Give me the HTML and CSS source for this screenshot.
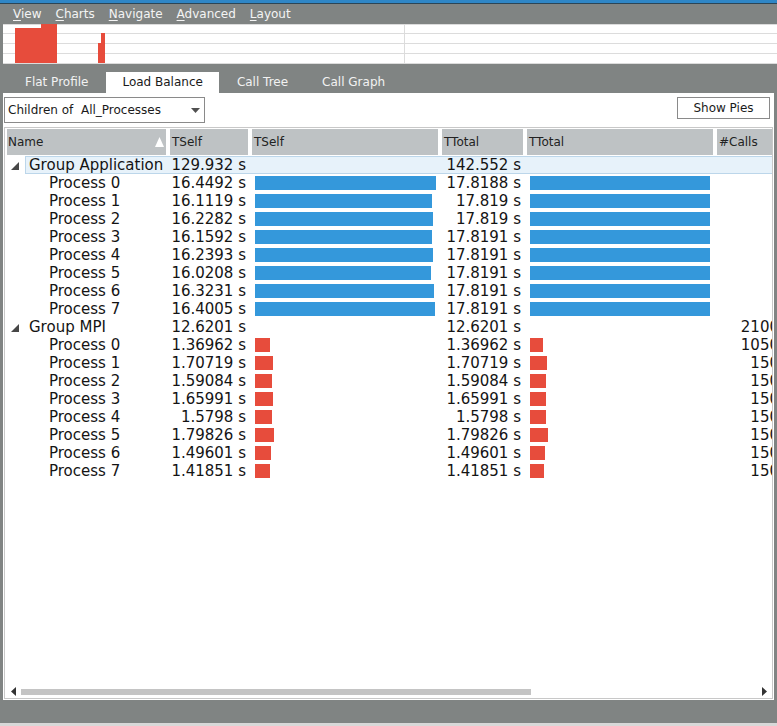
FILE: index.html
```html
<!DOCTYPE html>
<html>
<head>
<meta charset="utf-8">
<link rel="stylesheet" href="styles.css">
</head>
<body>
<div class="app">
  <div class="titlebar"></div>
  <div class="menubar">
    <span class="menu"><u>V</u>iew</span>
    <span class="menu"><u>C</u>harts</span>
    <span class="menu"><u>N</u>avigate</span>
    <span class="menu"><u>A</u>dvanced</span>
    <span class="menu"><u>L</u>ayout</span>
  </div>
  <div class="chart">
    <svg width="774" height="40" viewBox="0 0 774 40">
      <rect x="0" y="0" width="774" height="40" fill="#ffffff"/>
      <rect x="0" y="0" width="774" height="1" fill="#dcdcdc"/>
      <rect x="0" y="9" width="774" height="1" fill="#dcdcdc"/>
      <rect x="0" y="19" width="774" height="1" fill="#dcdcdc"/>
      <rect x="0" y="29" width="774" height="1" fill="#dcdcdc"/>
      <rect x="0" y="39" width="774" height="1" fill="#dcdcdc"/>
      <rect x="401" y="0" width="1" height="40" fill="#dcdcdc"/>
      <rect x="12" y="4" width="42" height="35" fill="#e74c3c"/>
      <rect x="38" y="0" width="16" height="4" fill="#e74c3c"/>
      <rect x="95" y="19" width="3" height="20" fill="#e74c3c"/>
      <rect x="98" y="9" width="4" height="30" fill="#e74c3c"/>
    </svg>
  </div>
  <div class="tabbar">
    <span class="tab">Flat Profile</span>
    <span class="tab active">Load Balance</span>
    <span class="tab">Call Tree</span>
    <span class="tab">Call Graph</span>
  </div>
  <div class="panel">
    <div class="toolbar">
      <div class="combo">
        <span class="combo-text">Children of  All_Processes</span>
        <svg class="combo-arrow" width="9" height="5" viewBox="0 0 9 5"><polygon points="0,0 9,0 4.5,5" fill="#505050"/></svg>
      </div>
      <div class="button">Show Pies</div>
    </div>
    <div class="table">
      <div class="header">
        <div class="hcell name-h"><span>Name</span><svg width="9" height="10" viewBox="0 0 9 10"><polygon points="4.5,0 9,10 0,10" fill="#ffffff"/></svg></div>
        <div class="hcell">TSelf</div>
        <div class="hcell">TSelf</div>
        <div class="hcell">TTotal</div>
        <div class="hcell">TTotal</div>
        <div class="hcell">#Calls</div>
      </div>
      <div class="rows">
        <div class="row">
          <div class="twisty"><svg width="8" height="8" viewBox="0 0 8 8"><polygon points="8,0 8,8 0,8" fill="#474747"/></svg></div>
          <div class="cells selected">
            <div class="c name">Group Application</div>
            <div class="c num">129.932 s</div>
            <div class="c bar"></div>
            <div class="c num">142.552 s</div>
            <div class="c bar"></div>
            <div class="c calls"></div>
          </div>
        </div>
        <div class="row"><div class="twisty"></div><div class="cells">
          <div class="c name child">Process 0</div><div class="c num">16.4492 s</div><div class="c bar"><i class="b blue" style="width:181px"></i></div><div class="c num">17.8188 s</div><div class="c bar"><i class="b blue" style="width:180px"></i></div><div class="c calls"></div></div></div>
        <div class="row"><div class="twisty"></div><div class="cells">
          <div class="c name child">Process 1</div><div class="c num">16.1119 s</div><div class="c bar"><i class="b blue" style="width:177px"></i></div><div class="c num">17.819 s</div><div class="c bar"><i class="b blue" style="width:180px"></i></div><div class="c calls"></div></div></div>
        <div class="row"><div class="twisty"></div><div class="cells">
          <div class="c name child">Process 2</div><div class="c num">16.2282 s</div><div class="c bar"><i class="b blue" style="width:178px"></i></div><div class="c num">17.819 s</div><div class="c bar"><i class="b blue" style="width:180px"></i></div><div class="c calls"></div></div></div>
        <div class="row"><div class="twisty"></div><div class="cells">
          <div class="c name child">Process 3</div><div class="c num">16.1592 s</div><div class="c bar"><i class="b blue" style="width:177px"></i></div><div class="c num">17.8191 s</div><div class="c bar"><i class="b blue" style="width:180px"></i></div><div class="c calls"></div></div></div>
        <div class="row"><div class="twisty"></div><div class="cells">
          <div class="c name child">Process 4</div><div class="c num">16.2393 s</div><div class="c bar"><i class="b blue" style="width:178px"></i></div><div class="c num">17.8191 s</div><div class="c bar"><i class="b blue" style="width:180px"></i></div><div class="c calls"></div></div></div>
        <div class="row"><div class="twisty"></div><div class="cells">
          <div class="c name child">Process 5</div><div class="c num">16.0208 s</div><div class="c bar"><i class="b blue" style="width:176px"></i></div><div class="c num">17.8191 s</div><div class="c bar"><i class="b blue" style="width:180px"></i></div><div class="c calls"></div></div></div>
        <div class="row"><div class="twisty"></div><div class="cells">
          <div class="c name child">Process 6</div><div class="c num">16.3231 s</div><div class="c bar"><i class="b blue" style="width:179px"></i></div><div class="c num">17.8191 s</div><div class="c bar"><i class="b blue" style="width:180px"></i></div><div class="c calls"></div></div></div>
        <div class="row"><div class="twisty"></div><div class="cells">
          <div class="c name child">Process 7</div><div class="c num">16.4005 s</div><div class="c bar"><i class="b blue" style="width:180px"></i></div><div class="c num">17.8191 s</div><div class="c bar"><i class="b blue" style="width:180px"></i></div><div class="c calls"></div></div></div>
        <div class="row">
          <div class="twisty"><svg width="8" height="8" viewBox="0 0 8 8"><polygon points="8,0 8,8 0,8" fill="#474747"/></svg></div>
          <div class="cells">
            <div class="c name">Group MPI</div><div class="c num">12.6201 s</div><div class="c bar"></div><div class="c num">12.6201 s</div><div class="c bar"></div><div class="c calls">2100</div>
          </div>
        </div>
        <div class="row"><div class="twisty"></div><div class="cells">
          <div class="c name child">Process 0</div><div class="c num">1.36962 s</div><div class="c bar"><i class="b red" style="width:15px"></i></div><div class="c num">1.36962 s</div><div class="c bar"><i class="b red" style="width:13px"></i></div><div class="c calls">1050</div></div></div>
        <div class="row"><div class="twisty"></div><div class="cells">
          <div class="c name child">Process 1</div><div class="c num">1.70719 s</div><div class="c bar"><i class="b red" style="width:18px"></i></div><div class="c num">1.70719 s</div><div class="c bar"><i class="b red" style="width:17px"></i></div><div class="c calls">150</div></div></div>
        <div class="row"><div class="twisty"></div><div class="cells">
          <div class="c name child">Process 2</div><div class="c num">1.59084 s</div><div class="c bar"><i class="b red" style="width:17px"></i></div><div class="c num">1.59084 s</div><div class="c bar"><i class="b red" style="width:16px"></i></div><div class="c calls">150</div></div></div>
        <div class="row"><div class="twisty"></div><div class="cells">
          <div class="c name child">Process 3</div><div class="c num">1.65991 s</div><div class="c bar"><i class="b red" style="width:18px"></i></div><div class="c num">1.65991 s</div><div class="c bar"><i class="b red" style="width:16px"></i></div><div class="c calls">150</div></div></div>
        <div class="row"><div class="twisty"></div><div class="cells">
          <div class="c name child">Process 4</div><div class="c num">1.5798 s</div><div class="c bar"><i class="b red" style="width:17px"></i></div><div class="c num">1.5798 s</div><div class="c bar"><i class="b red" style="width:16px"></i></div><div class="c calls">150</div></div></div>
        <div class="row"><div class="twisty"></div><div class="cells">
          <div class="c name child">Process 5</div><div class="c num">1.79826 s</div><div class="c bar"><i class="b red" style="width:19px"></i></div><div class="c num">1.79826 s</div><div class="c bar"><i class="b red" style="width:18px"></i></div><div class="c calls">150</div></div></div>
        <div class="row"><div class="twisty"></div><div class="cells">
          <div class="c name child">Process 6</div><div class="c num">1.49601 s</div><div class="c bar"><i class="b red" style="width:16px"></i></div><div class="c num">1.49601 s</div><div class="c bar"><i class="b red" style="width:15px"></i></div><div class="c calls">150</div></div></div>
        <div class="row"><div class="twisty"></div><div class="cells">
          <div class="c name child">Process 7</div><div class="c num">1.41851 s</div><div class="c bar"><i class="b red" style="width:15px"></i></div><div class="c num">1.41851 s</div><div class="c bar"><i class="b red" style="width:14px"></i></div><div class="c calls">150</div></div></div>
      </div>
      <div class="scrollbar">
        <svg class="sarrow" width="5" height="9" viewBox="0 0 5 9"><polygon points="5,0 5,9 0,4.5" fill="#333"/></svg>
        <div class="track"><div class="thumb"></div></div>
        <svg class="sarrow" width="5" height="9" viewBox="0 0 5 9"><polygon points="0,0 5,4.5 0,9" fill="#333"/></svg>
      </div>
    </div>
  </div>
  <div class="statusbar"></div>
</div>
</body>
</html>
```

FILE: styles.css
```css
* { box-sizing: border-box; }
html, body {
  margin: 0;
  padding: 0;
}
body {
  width: 777px;
  height: 726px;
  overflow: hidden;
  background: #808483;
  font-family: "DejaVu Sans", "Liberation Sans", sans-serif;
}
.app {
  display: flex;
  flex-direction: column;
  width: 777px;
  height: 726px;
}
.titlebar {
  height: 4px;
  background: #2f86c6;
  border-bottom: 1px solid #2b4556;
}
.menubar {
  height: 20px;
  display: flex;
  align-items: center;
  padding-left: 6px;
  font-size: 12px;
  color: #f4f4f4;
}
.menu {
  padding: 0 7px;
  line-height: 20px;
}
.menu u {
  text-underline-offset: 2px;
}
.chart {
  height: 40px;
  margin-left: 3px;
  display: flex;
}
.chart svg { display: block; }
.tabbar {
  height: 29px;
  display: flex;
  align-items: flex-end;
  gap: 2px;
  padding-left: 9px;
  font-size: 12px;
}
.tab {
  height: 21px;
  line-height: 21px;
  padding: 0 16px;
  color: #f2f2f2;
}
.tab.active {
  background: #ffffff;
  color: #1a1a1a;
}
.panel {
  height: 607px;
  margin: 0 3px;
  background: #ffffff;
  padding: 4px 1px 1px 1px;
  display: flex;
  flex-direction: column;
  gap: 4px;
}
.toolbar {
  height: 26px;
  display: flex;
  justify-content: space-between;
  align-items: flex-start;
}
.combo {
  width: 201px;
  height: 26px;
  border: 1px solid #8a8a8a;
  display: flex;
  align-items: center;
  justify-content: space-between;
  padding: 0 4px 0 3px;
  font-size: 12px;
  color: #1a1a1a;
}
.combo-text { white-space: pre; }
.combo-arrow { display: block; margin-right: 0; }
.button {
  width: 93px;
  height: 22px;
  margin-right: 3px;
  border: 1px solid #8a8a8a;
  font-size: 12px;
  color: #1a1a1a;
  display: flex;
  align-items: center;
  justify-content: center;
}
.table {
  flex: 1;
  border: 1px solid #c8c8c8;
  padding: 1px 0 0 2px;
  overflow: hidden;
  display: flex;
  flex-direction: column;
}
.header {
  display: grid;
  grid-template-columns: 159px 78px 186px 81px 186px 70px;
  column-gap: 4px;
  height: 26px;
  flex: none;
  margin-bottom: 1px;
}
.hcell {
  background: #bec2c4;
  font-size: 12px;
  color: #222;
  display: flex;
  align-items: center;
  padding-left: 2px;
  white-space: nowrap;
}
.name-h {
  justify-content: space-between;
  padding-left: 1px;
  padding-right: 2px;
}
.name-h svg { display: block; }
.rows {
  flex: 1;
  display: flex;
  flex-direction: column;
}
.row {
  display: flex;
  height: 18px;
  flex: none;
}
.twisty {
  width: 18px;
  flex: none;
  display: flex;
  align-items: flex-start;
  padding: 6px 0 0 4px;
}
.twisty svg { display: block; }
.cells {
  display: grid;
  grid-template-columns: 141px 78px 186px 81px 186px 70px;
  column-gap: 4px;
  flex: none;
  font-size: 15px;
  line-height: 18px;
  color: #141414;
}
.cells.selected {
  background: #e7f2fa;
  box-shadow: inset 0 0 0 1px #bcd6ea;
}
.c {
  white-space: nowrap;
  overflow: hidden;
}
.name { padding-left: 4px; }
.name.child { padding-left: 24px; }
.num {
  text-align: right;
  padding-right: 2px;
}
.bar {
  padding: 2px 0 0 3px;
}
.b {
  display: block;
  height: 14px;
}
.b.blue { background: #3498db; }
.b.red { background: #e74c3c; }
.calls {
  text-align: right;
  padding-right: 8px;
}
.scrollbar {
  height: 12px;
  flex: none;
  display: flex;
  align-items: center;
  padding: 0 5px 1px 4px;
}
.sarrow { display: block; flex: none; }
.track {
  flex: 1;
  margin: 0 4px 0 5px;
  height: 6px;
}
.thumb {
  width: 510px;
  height: 6px;
  background: #c4c4c4;
}
.statusbar {
  height: 26px;
  border-bottom: 3px solid #d8d8d8;
}
```
